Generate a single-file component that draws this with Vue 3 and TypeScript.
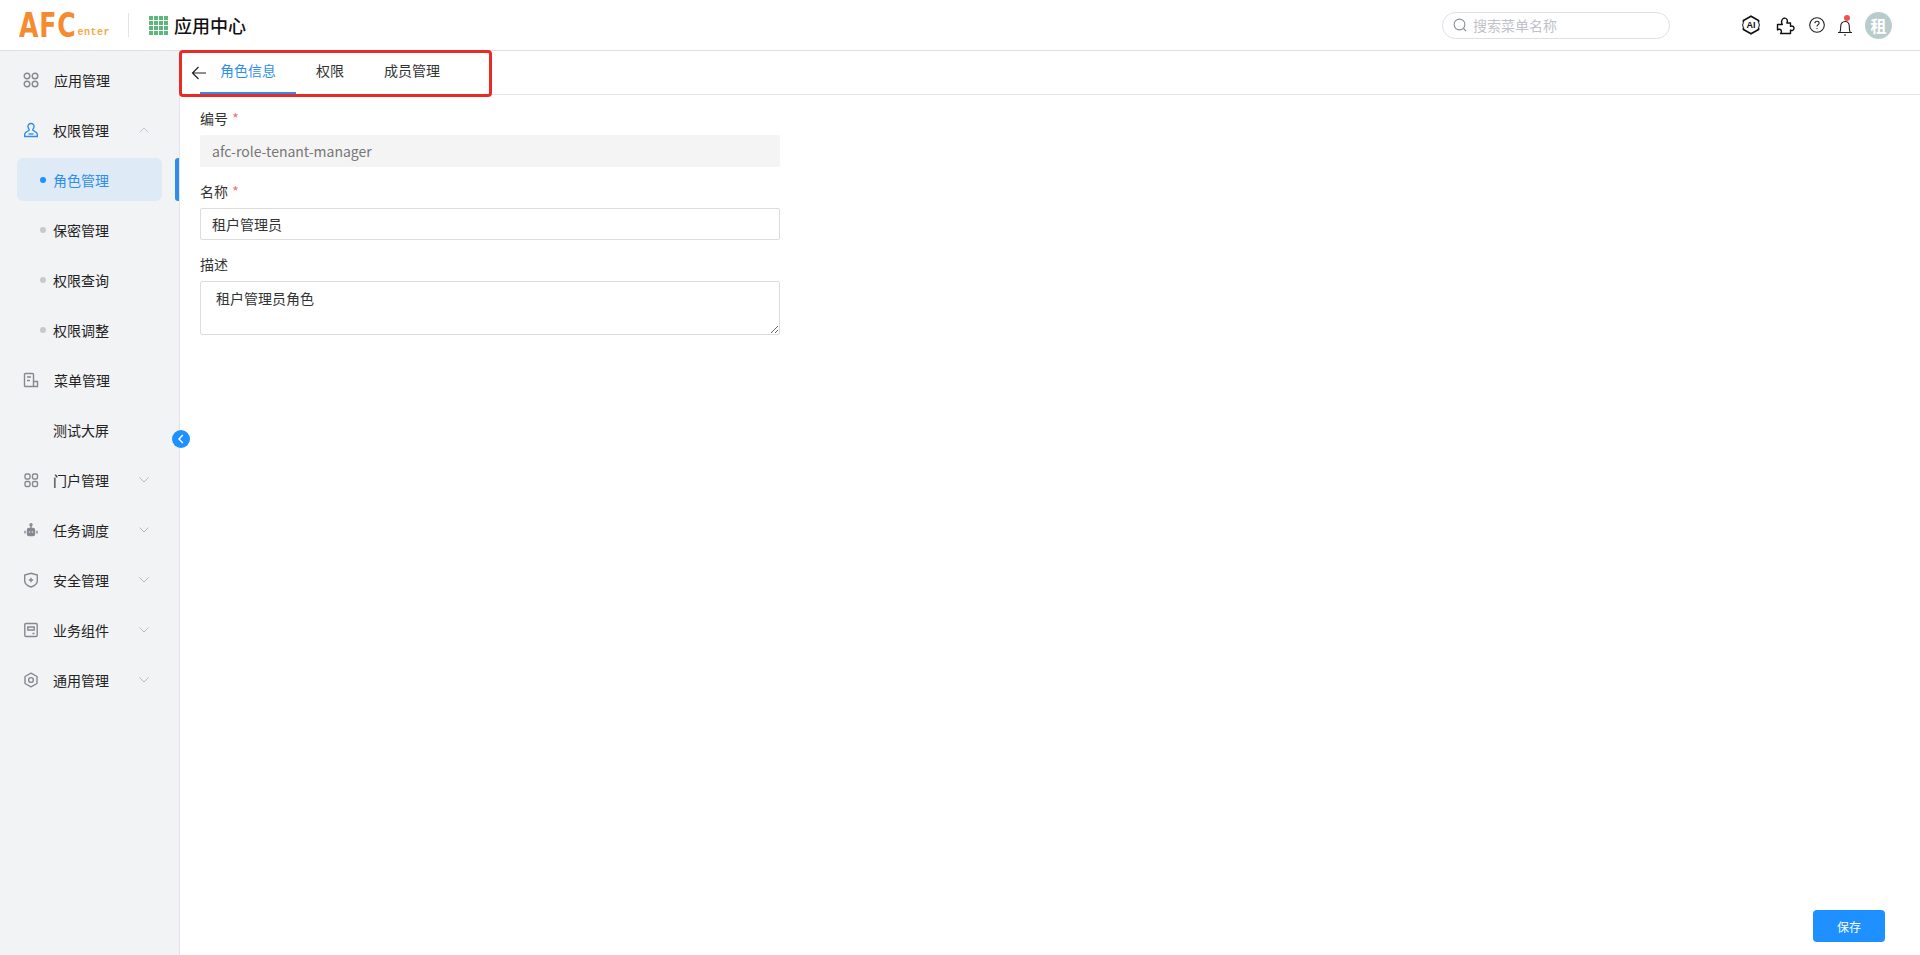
<template>
  <div class="page">
    <header class="topbar">
      <div class="logo"><span class="logo-afc">AFC</span><span class="logo-enter">enter</span></div>
      <div class="divider"></div>
      <div class="grid-icon"><i v-for="n in 16" :key="n"></i></div>
      <div class="app-title">应用中心</div>

      <div class="search">
        <svg width="14" height="14" viewBox="0 0 14 14" fill="none" stroke="#8a8f99" stroke-width="1.1">
          <circle cx="6.5" cy="6.5" r="5.4" />
          <path d="M10.5 10.5L13 13" />
        </svg>
        <span>搜索菜单名称</span>
      </div>

      <div class="tools">
        <svg class="t-ai" width="18" height="20" viewBox="0 0 18 20" fill="none" stroke="#111" stroke-width="1.6">
          <path d="M1.400 7.500V5.500L9 1.200L16.600 5.500V7.500M16.600 12.500V14.500L9 18.800L1.400 14.500V12.500" />
          <path d="M1.400 7.500L.6 10L1.400 12.500M16.600 7.500L17.400 10L16.600 12.500" stroke-width="1" />
          <text x="9" y="13.400" text-anchor="middle" class="ai-text">AI</text>
        </svg>
        <svg class="t-puzzle" width="19" height="19" viewBox="0 0 19 19" fill="none" stroke="#111" stroke-width="1.4" stroke-linejoin="round">
          <path d="M1.500 8.500H6.300C5 6.500 5.400 3 8 2.200C10.800 1.600 12.200 4.600 10.800 7H14.500V10.300C16.500 9.300 18.200 10.600 18 12.500C17.800 14.300 16 15 14.500 14.100V17.500H4.500C6 16.200 5.700 13.800 3.700 13.300C2.600 13.100 1.800 13.500 1.500 14Z" />
        </svg>
        <svg class="t-help" width="16" height="16" viewBox="0 0 16 16" fill="none" stroke="#222" stroke-width="1.1">
          <circle cx="8" cy="8" r="7.3" />
          <path d="M5.900 6.300C5.900 5 6.900 4.300 8 4.300C9.200 4.300 10.100 5.100 10.100 6.200C10.100 7.700 8 7.700 8 9.500" />
          <circle cx="8" cy="11.500" r=".6" fill="#222" stroke="none" />
        </svg>
        <div class="bell">
          <svg width="16" height="20" viewBox="0 0 16 20" fill="none" stroke="#222" stroke-width="1.1">
            <path d="M1 16.500H15M2.800 16.500C3.600 15 3.700 13 3.700 10.500C3.700 7.500 5.500 5.500 8 5.500C10.500 5.500 12.300 7.500 12.300 10.500C12.300 13 12.400 15 13.200 16.500" />
            <path d="M7 19H9" />
          </svg>
          <span class="bell-dot"></span>
        </div>
        <div class="avatar">租</div>
      </div>
    </header>

    <div class="body">
      <aside class="sidebar">
        <div
          v-for="item in menu"
          :key="item.label"
          class="menu-item"
          :class="{ sub: item.sub, active: item.active, open: item.open }"
        >
          <span v-if="item.sub && item.dot" class="dot"></span>
          <svg v-if="item.icon" class="menu-icon" width="16" height="16" viewBox="0 0 16 16" fill="none" :stroke="item.open ? '#2f8eed' : '#85898f'" stroke-width="1.4" v-html="icons[item.icon]"></svg>
          <span class="menu-label" :class="{ wide: item.wide }">{{ item.label }}</span>
          <svg v-if="item.arrow" class="chevron" width="10" height="6" viewBox="0 0 10 6" fill="none" :stroke="item.open ? '#b9c9de' : '#b5b8bd'" stroke-width="1">
            <path :d="item.open ? 'M.5 5.500L5 1L9.500 5.500' : 'M.5 .5L5 5L9.500 .5'" />
          </svg>
        </div>
        <span class="indicator"></span>
        <span class="collapse">
          <svg width="8" height="10" viewBox="0 0 8 10" fill="none" stroke="#fff" stroke-width="1.400"><path d="M5.800 1L2 5L5.800 9" /></svg>
        </span>
      </aside>

      <main class="main">
        <div class="tabs-bar">
          <svg class="back" width="16" height="14" viewBox="0 0 16 14" fill="none" stroke="#222" stroke-width="1.200">
            <path d="M15 7H1.500M7.500 1L1.500 7L7.500 13" />
          </svg>
          <div v-for="(t, i) in tabs" :key="t" class="tab" :class="{ current: i === 0 }">{{ t }}</div>
          <div class="red-box"></div>
        </div>

        <form class="form" @submit.prevent>
          <label class="field-label">编号 <em>*</em></label>
          <input class="input disabled" value="afc-role-tenant-manager" readonly />
          <label class="field-label">名称 <em>*</em></label>
          <input class="input" value="租户管理员" readonly />
          <label class="field-label">描述</label>
          <textarea class="input area" readonly>租户管理员角色</textarea>
        </form>

        <button class="save" type="button">保存</button>
      </main>
    </div>
  </div>
</template>

<script setup lang="ts">
interface MenuItem {
  label: string
  icon?: string
  arrow?: boolean
  open?: boolean
  sub?: boolean
  dot?: boolean
  active?: boolean
  wide?: boolean
}

const icons: Record<string, string> = {
  apps: '<circle cx="4" cy="4" r="2.8"/><circle cx="12" cy="4" r="2.8"/><circle cx="4" cy="12" r="2.800"/><circle cx="12" cy="12" r="2.800"/>',
  user: '<path d="M8 1.500C5.800 1.500 4.600 3.200 5 5.200C5.300 6.700 6.300 7 6.300 8C6.300 9 1.700 9.500 1.700 12V14.500H14.300V12C14.300 9.500 9.700 9 9.700 8C9.700 7 10.700 6.700 11 5.200C11.400 3.200 10.200 1.500 8 1.500Z"/><path d="M5.500 12H10.500"/>',
  doc: '<path d="M10.500 14.500H2.500A1 1 0 0 1 1.500 13.500V2.500A1 1 0 0 1 2.500 1.500H9.500A1 1 0 0 1 10.500 2.500V14.500H14.500V9.500H10.500"/><path d="M4 5H8M4 8.500H7"/>',
  portal: '<rect x="2" y="2" width="5" height="5" rx="1.600"/><rect x="9.500" y="2" width="5" height="5" rx="1.600"/><rect x="2" y="9.500" width="5" height="5" rx="1.600"/><rect x="9.500" y="9.500" width="5" height="5" rx="1.600"/>',
  robot: '<rect x="4.500" y="6.500" width="7" height="7" rx="1.500" fill="#85898f"/><circle cx="8" cy="2.800" r="1"/><path d="M8 3.800V6.500M2 8.800V11.500M14 8.800V11.500"/><path d="M6.500 9.500V10.500M9.500 9.500V10.500" stroke="#f2f3f5"/>',
  shield: '<path d="M8 1.300L14.300 3V9C14.300 12 11 14 8 15C5 14 1.700 12 1.700 9V3Z"/><path d="M5.800 8H10.200M8 5.800V10.200"/>',
  card: '<rect x="1.800" y="1.500" width="12.400" height="13" rx="1.200"/><path d="M4.800 5H11.200V8H4.800ZM9.500 11.500H11.500"/>',
  gear: '<path d="M8 1.200L14 4.500V11.500L8 14.800L2 11.500V4.500Z" stroke-linejoin="round"/><circle cx="8" cy="8" r="2.400"/>'
}

const menu: MenuItem[] = [
  { label: '应用管理', icon: 'apps', wide: true },
  { label: '权限管理', icon: 'user', arrow: true, open: true },
  { label: '角色管理', sub: true, dot: true, active: true },
  { label: '保密管理', sub: true, dot: true },
  { label: '权限查询', sub: true, dot: true },
  { label: '权限调整', sub: true, dot: true },
  { label: '菜单管理', icon: 'doc', wide: true },
  { label: '测试大屏', sub: true },
  { label: '门户管理', icon: 'portal', arrow: true },
  { label: '任务调度', icon: 'robot', arrow: true },
  { label: '安全管理', icon: 'shield', arrow: true },
  { label: '业务组件', icon: 'card', arrow: true },
  { label: '通用管理', icon: 'gear', arrow: true }
]

const tabs = ['角色信息', '权限', '成员管理']
</script>

<style>
html,
body {
  margin: 0;
  background: #fff;
}
</style>

<style scoped>
.page {
  width: 1920px;
  height: 955px;
  display: flex;
  flex-direction: column;
  overflow: hidden;
  font-family: "Noto Sans CJK SC", "Noto Sans", sans-serif;
  font-size: 14px;
  color: #222;
}

.topbar {
  height: 50px;
  flex: none;
  display: flex;
  align-items: center;
  border-bottom: 1px solid #dcdfe3;
  padding-left: 19px;
  background: #fff;
}

.logo {
  width: 92px;
  display: flex;
  align-items: flex-end;
  height: 26px;
  color: #f58a2e;
  font-family: "DejaVu Sans", sans-serif;
  font-weight: 700;
  line-height: 1;
}

.logo-afc {
  font-size: 34px;
  letter-spacing: 1px;
  transform: scaleX(.74);
  transform-origin: left bottom;
  margin-right: -19px;
  line-height: 26px;
}

.logo-enter {
  font-size: 10px;
  font-weight: 700;
  letter-spacing: .5px;
  color: #f4a947;
  font-family: "Liberation Mono", monospace;
}

.divider {
  width: 1px;
  height: 24px;
  background: #e3e4e6;
  margin-left: 17px;
}

.grid-icon {
  margin-left: 20px;
  width: 19px;
  height: 19px;
  display: grid;
  grid-template-columns: repeat(4, 1fr);
  gap: 1px;
}

.grid-icon i {
  background: #5cb87a;
}

.app-title {
  margin-left: 6px;
  font-size: 18px;
  font-weight: 500;
  color: #111;
}

.search {
  margin-left: auto;
  width: 228px;
  height: 27px;
  box-sizing: border-box;
  border: 1px solid #dcdfe6;
  border-radius: 14px;
  display: flex;
  align-items: center;
  padding-left: 10px;
  gap: 6px;
  font-size: 14px;
  color: #bfc2c9;
}

.tools {
  margin-left: 72px;
  margin-right: 28px;
  display: flex;
  align-items: center;
  height: 30px;
}

.t-puzzle {
  margin-left: 16px;
}

.t-help {
  margin-left: 14px;
}

.ai-text {
  font-family: "Liberation Sans", sans-serif;
  font-size: 9px;
  font-weight: 700;
  fill: #111;
  stroke: none;
}

.bell {
  position: relative;
  margin-left: 12px;
  height: 20px;
  width: 16px;
  margin-top: 2px;
}

.bell svg {
  display: block;
}

.bell-dot {
  position: absolute;
  top: -1px;
  left: 7px;
  width: 6px;
  height: 6px;
  border-radius: 50%;
  background: #f0524f;
}

.avatar {
  margin-left: 12px;
  width: 27px;
  height: 27px;
  border-radius: 50%;
  background: #b9cccc;
  color: #fff;
  font-family: "Noto Sans CJK SC", sans-serif;
  font-weight: 700;
  font-size: 16px;
  display: flex;
  align-items: center;
  justify-content: center;
}

.body {
  flex: 1;
  display: flex;
  min-height: 0;
}

.sidebar {
  position: relative;
  width: 179px;
  flex: none;
  box-sizing: content-box;
  background: #f2f3f5;
  border-right: 1px solid #e2e4e8;
  padding-top: 8px;
  display: flex;
  flex-direction: column;
  gap: 8px;
}

.menu-item {
  height: 42px;
  flex: none;
  margin: 0 17px;
  width: 145px;
  border-radius: 6px;
  display: flex;
  align-items: center;
  position: relative;
  padding-left: 6px;
  box-sizing: border-box;
  color: #222;
}

.menu-icon {
  flex: none;
  margin-right: 14px;
}

.menu-label.wide {
  margin-left: 1px;
}

.menu-item.sub {
  padding-left: 36px;
}

.menu-item.active {
  background: #deeaf6;
  color: #2f8eed;
  height: 43px;
  margin-top: -1px;
  padding-top: 1px;
}

.dot {
  position: absolute;
  left: 23px;
  top: 18px;
  width: 6px;
  height: 6px;
  border-radius: 50%;
  background: #c8c9cc;
}

.active .dot {
  background: #1e90ff;
  top: 19px;
}

.chevron {
  position: absolute;
  left: 122px;
  top: 18px;
}

.indicator {
  position: absolute;
  left: 175px;
  top: 107px;
  width: 4px;
  height: 43px;
  border-radius: 3px 0 0 3px;
  background: #2f8eed;
}

.collapse {
  position: absolute;
  left: 172px;
  top: 379px;
  width: 18px;
  height: 18px;
  border-radius: 50%;
  background: #1e90ff;
  display: flex;
  align-items: center;
  justify-content: center;
  z-index: 2;
}

.main {
  flex: 1;
  position: relative;
  min-width: 0;
}

.tabs-bar {
  height: 43px;
  position: relative;
  display: flex;
  padding-left: 20px;
  border-bottom: 1px solid #e6e7ea;
}

.back {
  position: absolute;
  left: 11px;
  top: 15px;
}

.tab {
  padding: 0 20px;
  height: 43px;
  line-height: 39px;
  color: #333;
  box-sizing: border-box;
}

.tab.current {
  color: #2f8eed;
  border-bottom: 2px solid #2f8eed;
}

.red-box {
  position: absolute;
  left: -1px;
  top: -1px;
  width: 313px;
  height: 47px;
  box-sizing: border-box;
  border: 3px solid #ea2a25;
  border-radius: 4px;
  pointer-events: none;
}

.form {
  width: 580px;
  margin-left: 20px;
  display: flex;
  flex-direction: column;
}

.field-label {
  height: 22px;
  line-height: 22px;
  margin-top: 13px;
  margin-bottom: 6px;
  color: #333;
}

.field-label:first-child {
  margin-top: 12px;
}

.field-label em {
  color: #f56c6c;
  font-style: normal;
  margin-left: 1px;
}

.input {
  box-sizing: border-box;
  width: 580px;
  height: 32px;
  border: 1px solid #dcdcdc;
  border-radius: 2px;
  padding: 0 11px;
  font-family: "Noto Sans CJK SC", "Noto Sans", sans-serif;
  font-size: 14px;
  color: #333;
  outline: none;
  background: #fff;
  display: block;
}

.input.disabled {
  background: #f4f4f5;
  border-color: #f4f4f5;
  color: #777;
}

.area {
  height: 54px;
  padding: 6px 15px;
  line-height: 20px;
  resize: vertical;
}

.save {
  position: absolute;
  right: 35px;
  bottom: 13px;
  width: 72px;
  height: 32px;
  border: 0;
  border-radius: 4px;
  background: #1e90ff;
  color: #fff;
  font-family: "Noto Sans CJK SC", sans-serif;
  font-size: 12px;
}
</style>
